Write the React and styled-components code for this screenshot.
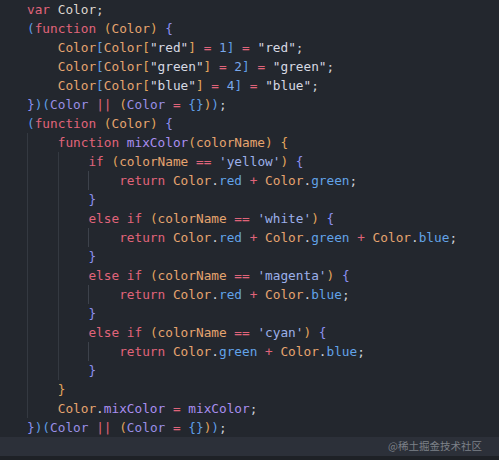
import React from "react";
import styled, { createGlobalStyle } from "styled-components";

const GlobalStyle = createGlobalStyle`
  html, body {
    margin: 0;
    padding: 0;
    background: #1e2126;
  }
  #root {
    height: 100vh;
  }
`;

const colors = {
  kw: "#e0647a",
  name: "#ddd6cf",
  param: "#e6a46f",
  glob: "#9a8fe6",
  fn: "#a98ef0",
  str: "#d7d9e3",
  sq: "#9cb0ea",
  num: "#7ba8ea",
  prop: "#62a3e8",
  op: "#e0647a",
  punc: "#cdd1d8",
  blue: "#5f9ee6",
  gold: "#e2a55c",
  violet: "#8c8ff0",
};

// [indent, guides(array of bools per indent unit), tokens]
const t = (c, s) => [c, s];

const iifeHead = [
  t("blue", "("), t("kw", "function"), t("punc", " "), t("gold", "("),
  t("param", "Color"), t("gold", ")"), t("punc", " "), t("violet", "{"),
];

const iifeTail = [
  t("violet", "}"), t("blue", ")("), t("glob", "Color"), t("punc", " "),
  t("op", "||"), t("punc", " "), t("gold", "("), t("glob", "Color"),
  t("punc", " "), t("op", "="), t("punc", " "), t("blue", "{}"),
  t("gold", ")"), t("blue", ")"), t("punc", ";"),
];

const enumLine = (key, n) => [
  t("param", "Color"), t("blue", "["), t("param", "Color"), t("gold", "["),
  t("str", `"${key}"`), t("gold", "]"), t("punc", " "), t("op", "="),
  t("punc", " "), t("num", String(n)), t("blue", "]"), t("punc", " "),
  t("op", "="), t("punc", " "), t("str", `"${key}"`), t("punc", ";"),
];

const ifLine = (prefix, name) => [
  ...(prefix ? [t("kw", "else"), t("punc", " ")] : []),
  t("kw", "if"), t("punc", " "), t("gold", "("), t("param", "colorName"),
  t("punc", " "), t("op", "=="), t("punc", " "), t("sq", `'${name}'`),
  t("gold", ")"), t("punc", " "), t("violet", "{"),
];

const returnLine = (props) => {
  const out = [t("kw", "return"), t("punc", " ")];
  props.forEach((p, i) => {
    if (i > 0) out.push(t("punc", " "), t("op", "+"), t("punc", " "));
    out.push(t("param", "Color"), t("punc", "."), t("prop", p));
  });
  out.push(t("punc", ";"));
  return out;
};

const lines = [
  { g: [], tokens: [t("kw", "var"), t("punc", " "), t("name", "Color"), t("punc", ";")] },
  { g: [], tokens: iifeHead },
  { g: [false], tokens: enumLine("red", 1) },
  { g: [false], tokens: enumLine("green", 2) },
  { g: [false], tokens: enumLine("blue", 4) },
  { g: [], tokens: iifeTail },
  { g: [], tokens: iifeHead },
  {
    g: [true],
    tokens: [
      t("kw", "function"), t("punc", " "), t("fn", "mixColor"), t("gold", "("),
      t("param", "colorName"), t("gold", ")"), t("punc", " "), t("gold", "{"),
    ],
  },
  { g: [true, true], tokens: ifLine(false, "yellow") },
  { g: [true, true, true], tokens: returnLine(["red", "green"]) },
  { g: [true, true], tokens: [t("violet", "}")] },
  { g: [true, true], tokens: ifLine(true, "white") },
  { g: [true, true, true], tokens: returnLine(["red", "green", "blue"]) },
  { g: [true, true], tokens: [t("violet", "}")] },
  { g: [true, true], tokens: ifLine(true, "magenta") },
  { g: [true, true, true], tokens: returnLine(["red", "blue"]) },
  { g: [true, true], tokens: [t("violet", "}")] },
  { g: [true, true], tokens: ifLine(true, "cyan") },
  { g: [true, true, true], tokens: returnLine(["green", "blue"]) },
  { g: [true, true], tokens: [t("violet", "}")] },
  { g: [true], tokens: [t("gold", "}")] },
  {
    g: [true],
    tokens: [
      t("param", "Color"), t("punc", "."), t("fn", "mixColor"), t("punc", " "),
      t("op", "="), t("punc", " "), t("fn", "mixColor"), t("punc", ";"),
    ],
  },
  { g: [], tokens: iifeTail },
];

function App() {
  return (
    <>
      <GlobalStyle />
      <Page>
        <Editor>
          {lines.map((line, i) => (
            <Line key={i}>
              {line.g.map((on, j) => (
                <Indent key={j} $guide={on} $deep={j === 2}>
                  {"    "}
                </Indent>
              ))}
              {line.tokens.map(([c, s], k) => (
                <Token key={k} $color={colors[c]}>
                  {s}
                </Token>
              ))}
            </Line>
          ))}
          <CurrentLine>
            <Watermark>@稀土掘金技术社区</Watermark>
          </CurrentLine>
        </Editor>
        <BottomStrip />
      </Page>
    </>
  );
}

const Page = styled.div`
  height: 100%;
  display: flex;
  flex-direction: column;
  background: #23272e;
`;

const Editor = styled.div`
  display: flex;
  flex-direction: column;
  font-family: "DejaVu Sans Mono", "Liberation Mono", monospace;
  font-size: 12.75px;
`;

const Line = styled.div`
  display: flex;
  align-items: stretch;
  height: 19px;
  line-height: 19px;
  padding-left: 27px;
  white-space: pre;
`;

const Indent = styled.span`
  display: block;
  box-shadow: ${(p) =>
    p.$guide ? `inset 1px 0 0 ${p.$deep ? "#3d424b" : "#343941"}` : "none"};
`;

const Token = styled.span`
  display: block;
  color: ${(p) => p.$color};
`;

const CurrentLine = styled.div`
  display: flex;
  justify-content: flex-end;
  align-items: center;
  height: 19px;
  padding-right: 17px;
  background: #2c3039;
`;

const Watermark = styled.span`
  font-family: "Noto Sans CJK SC", "Noto Sans", sans-serif;
  font-size: 10.5px;
  color: #7c8088;
  line-height: 1;
`;

const BottomStrip = styled.div`
  flex: 1;
  background: #1e2126;
`;

export default App;
